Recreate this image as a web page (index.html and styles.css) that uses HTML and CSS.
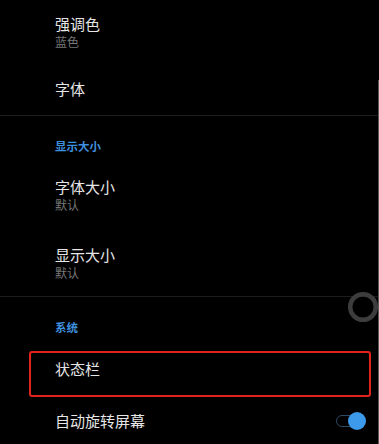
FILE: index.html
```html
<!DOCTYPE html>
<html>
<head>
    <title>显示设置</title>
    <link rel="stylesheet" href="styles.css">
</head>
<body>
    <div class="settings">
        <div class="item item-two first">
            <div class="title">强调色</div>
            <div class="summary">蓝色</div>
        </div>
        <div class="item item-one second">
            <div class="title">字体</div>
        </div>

        <div class="divider"></div>
        <div class="header">显示大小</div>
        <div class="item item-two">
            <div class="title">字体大小</div>
            <div class="summary">默认</div>
        </div>
        <div class="item item-two">
            <div class="title">显示大小</div>
            <div class="summary">默认</div>
        </div>

        <div class="divider"></div>
        <div class="header">系统</div>
        <div class="item item-one status highlight">
            <div class="title">状态栏</div>
        </div>
        <div class="item item-one rotate">
            <div class="title">自动旋转屏幕</div>
            <div class="switch on">
                <div class="track"></div>
                <div class="thumb"></div>
            </div>
        </div>
    </div>

    <!-- floating ball -->
    <svg class="float-ball" width="34" height="34" viewBox="0 0 34 34">
        <circle cx="17" cy="17" r="12.8" fill="none" stroke="#3d3d3d" stroke-width="4.5"/>
    </svg>
    <div class="scrollbar"></div>
</body>
</html>
```

FILE: styles.css
```css
* {
    margin: 0;
    padding: 0;
    box-sizing: border-box;
}

body {
    background: #000;
    width: 379px;
    height: 444px;
    overflow: hidden;
    position: relative;
    font-family: "Noto Sans CJK SC", "Noto Sans", sans-serif;
}

.settings {
    display: flex;
    flex-direction: column;
}

.item {
    display: flex;
    flex-direction: column;
    justify-content: center;
    padding-left: 55px;
    position: relative;
}

.item-two {
    height: 68px;
}

.item-one {
    height: 52px;
}

.item.first {
    height: 62px;
}

.item.second {
    height: 53px;
}

.title {
    color: #e6e6e6;
    font-size: 15px;
    line-height: 20px;
}

.summary {
    color: #767676;
    font-size: 12px;
    line-height: 15px;
}

.divider {
    height: 1px;
    background: #1c1c1c;
}

.header {
    height: 44px;
    padding: 23px 0 0 55px;
    color: #3f8fdf;
    font-size: 11.5px;
    font-weight: bold;
    line-height: 14px;
}

.status {
    height: 56px;
}

/* red annotation frame */
.highlight::after {
    content: "";
    position: absolute;
    left: 29px;
    top: 10px;
    right: 8px;
    bottom: 0;
    border: 2.5px solid #e3221b;
    border-radius: 3px;
}

.rotate {
    height: 47px;
    flex-direction: row;
    align-items: center;
    justify-content: space-between;
    padding-right: 13px;
}

.switch {
    position: relative;
    width: 30px;
    height: 18px;
}

.switch .track {
    position: absolute;
    left: 0;
    top: 3px;
    width: 24px;
    height: 12px;
    border: 1.5px solid #2c4a63;
    border-radius: 6px;
}

.switch .thumb {
    position: absolute;
    right: 0;
    top: 0;
    width: 18px;
    height: 18px;
    border-radius: 50%;
    background: #3d9aea;
}

.float-ball {
    position: absolute;
    left: 346px;
    top: 290px;
}

.scrollbar {
    position: absolute;
    right: 0;
    top: 80px;
    bottom: 0;
    width: 1px;
    background: #5a5a5a;
}
```
